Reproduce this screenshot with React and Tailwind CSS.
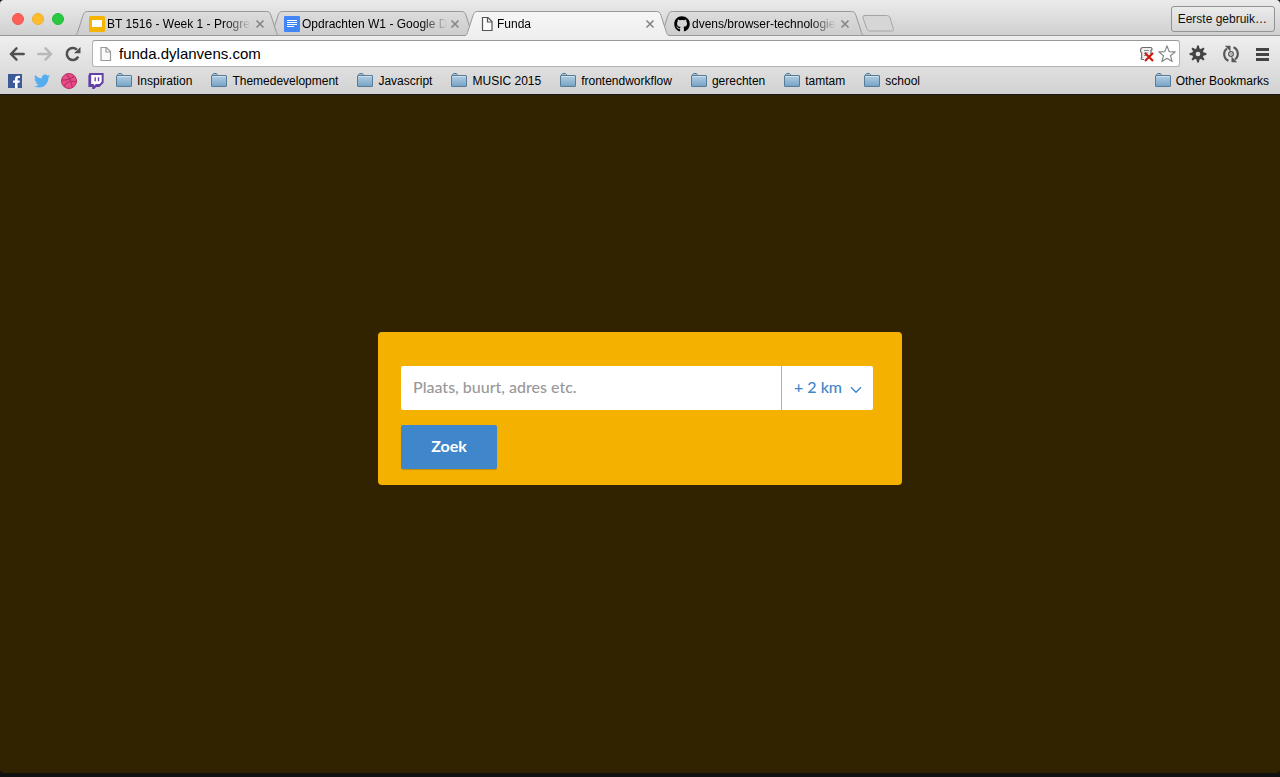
import React from "react";
import { FaTwitter, FaGithub } from "react-icons/fa";

function SlidesIcon() {
  return (
    <svg width="16" height="16" viewBox="0 0 16 16" className="shrink-0">
      <rect width="16" height="16" rx="1.5" fill="#f4b400" />
      <rect x="3" y="4" width="10" height="7" fill="#fff" />
    </svg>
  );
}

function DocsIcon() {
  return (
    <svg width="16" height="16" viewBox="0 0 16 16" className="shrink-0">
      <rect width="16" height="16" rx="1" fill="#4285f4" />
      <path d="M3 4.5h10M3 6.5h10M3 8.5h10M3 10.5h7" stroke="#fff" strokeWidth="1" />
    </svg>
  );
}

function PageIcon({ stroke = "#555", width = 16 }) {
  return (
    <svg width={width} height="16" viewBox="0 0 16 16" className="shrink-0">
      <path d="M3.500 1.500h5.500l4 4v9H3.500z" fill="#fafafa" stroke={stroke} strokeWidth="1.200" />
      <path d="M8.500 1.500v4.500h4.500" fill="none" stroke={stroke} strokeWidth="1.200" />
    </svg>
  );
}

function TabShape({ active }) {
  const curve =
    "M0 24.5C1.500 24.500 2 23 2.500 21.500L8 4.500C9 1.500 10 .5 12.500 .5H191.500C194 .5 195 1.500 196 4.500L201.500 21.500C202 23 202.500 24.500 204 24.500";
  return (
    <svg
      className="absolute inset-0 size-full"
      viewBox="0 0 204 25"
      preserveAspectRatio="none"
      aria-hidden="true"
    >
      <defs>
        <linearGradient id="tabActive" x1="0" y1="0" x2="0" y2="1">
          <stop offset="0" stopColor="#f6f6f6" />
          <stop offset="1" stopColor="#efefef" />
        </linearGradient>
        <linearGradient id="tabIdle" x1="0" y1="0" x2="0" y2="1">
          <stop offset="0" stopColor="#dcdcdc" />
          <stop offset="1" stopColor="#cdcdcd" />
        </linearGradient>
      </defs>
      <path d={active ? curve + "V25H0Z" : curve + "Z"} fill={active ? "url(#tabActive)" : "url(#tabIdle)"} />
      <path d={active ? curve : curve + "Z"} fill="none" stroke="#989898" />
    </svg>
  );
}

function Tab({ icon, title, active, layer }) {
  return (
    <div className={`relative -ml-[9px] flex h-[25px] w-[204px] items-center pl-3.5 ${layer}`}>
      <TabShape active={active} />
      <button
        type="button"
        role="tab"
        aria-selected={!!active}
        className="relative flex w-[162px] items-center gap-0.5 text-left"
      >
        {icon}
        <span className="flex-1 whitespace-nowrap text-xs [mask-image:linear-gradient(to_right,black_82%,transparent)]">
          {title}
        </span>
      </button>
      <button type="button" aria-label={`Close ${title}`} className="relative ml-1">
        <svg width="10" height="10" viewBox="0 0 10 10">
          <path d="M1.500 1.500l7 7M8.500 1.500l-7 7" stroke="#858585" strokeWidth="1.600" />
        </svg>
      </button>
    </div>
  );
}

function Folder() {
  return (
    <svg width="16" height="16" viewBox="0 0 16 16" className="shrink-0">
      <defs>
        <linearGradient id="folderFill" x1="0" y1="0" x2="0" y2="1">
          <stop offset="0" stopColor="#b3cfe3" />
          <stop offset="1" stopColor="#75a2c5" />
        </linearGradient>
      </defs>
      <path d="M1.500 3V1.500L2.500 .5H5.500L6.500 1.500V3" fill="#9fbfd6" stroke="#5a7d97" />
      <rect x=".5" y="2.500" width="15" height="11" rx=".5" fill="url(#folderFill)" stroke="#587c97" />
      <path d="M1.500 3.500h13" stroke="#cbdfed" />
    </svg>
  );
}

function Bookmark({ label }) {
  return (
    <a href="#" className="flex items-center gap-[5px] whitespace-nowrap text-xs">
      <Folder />
      {label}
    </a>
  );
}

function FacebookIcon() {
  return (
    <svg width="16" height="16" viewBox="0 0 16 16">
      <rect x="1" y="1" width="14" height="14" fill="#3c5a9a" />
      <path d="M8 15V9.800H6V7.500H8V6C8 4 9.300 2.800 11.200 2.800H13v2.200H11.800c-.9 0-1.200.4-1.200 1.100v1.400h2.300l-.3 2.300h-2V15z" fill="#fff" />
    </svg>
  );
}

function DribbbleIcon() {
  return (
    <svg width="16" height="16" viewBox="0 0 16 16">
      <circle cx="8" cy="8" r="7.500" fill="#e94c89" stroke="#b92e62" />
      <path
        d="M5.500 1C8.500 4.500 10.500 9 11.200 14.500M.8 7C6 7.200 10.500 6 13.300 2.800M3 13.500C5.500 8.500 10 7.500 15.200 8.800"
        fill="none"
        stroke="#b62f62"
        strokeWidth="1.100"
      />
    </svg>
  );
}

function TwitchIcon() {
  return (
    <svg width="16" height="16" viewBox="0 0 24 24">
      <path d="M4 2h18v12l-4 4h-6l-3 3v-3H4z" fill="#fff" />
      <path
        d="M2.149 0L.537 4.119v16.836h5.731V24h3.224l3.045-3.045h4.657l6.269-6.269V0zM20.500 13.200l-3.300 3.200h-5.300L8.800 19.300v-2.900H4.800V3h15.700z"
        fill="#6441a5"
      />
      <path d="M10.800 6.200v6.300M15.800 6.200v6.300" stroke="#6441a5" strokeWidth="2" />
    </svg>
  );
}

function BackArrow({ color, flip }) {
  return (
    <svg width="16" height="16" viewBox="0 0 16 16" className={flip ? "-scale-x-100" : ""}>
      <path d="M7.500 2.300L2 8l5.500 5.700M2.300 8H14.700" fill="none" stroke={color} strokeWidth="2.400" strokeLinecap="round" />
    </svg>
  );
}

function ReloadIcon() {
  return (
    <svg width="16" height="16" viewBox="0 0 16 16">
      <path d="M13.200 10.600A6 6 0 1 1 11.900 3.600" fill="none" stroke="#505050" strokeWidth="2.500" />
      <path d="M15.500 1v6.300H9z" fill="#505050" />
    </svg>
  );
}

function BlockedIcon() {
  return (
    <svg width="16" height="16" viewBox="0 0 16 16">
      <path
        d="M5 13.500H3.500C2 13.500 1.700 12.300 2.700 11.500V7C1.300 6.500 1.300 5.500 1.500 4 1.800 2.200 2.500 1.500 4 1.500h7.500c2 0 2 2.500.5 3V8"
        fill="#f0f0f0"
        stroke="#6a6a6a"
        strokeWidth="1.200"
      />
      <path d="M5 4.500h5M5 7h4M5 9.500h2" stroke="#8b8b8b" />
      <path d="M6 7l8 8M14 7l-8 8" stroke="#d31108" strokeWidth="2" />
    </svg>
  );
}

function StarIcon() {
  return (
    <svg width="18" height="18" viewBox="0 0 18 18">
      <path
        d="M9 .9l2.200 5.700 6 .3-4.700 3.800 1.600 5.900L9 13.300l-5.100 3.300 1.600-5.900L.8 6.900l6-.3z"
        fill="#fff"
        stroke="#858585"
        strokeWidth="1.200"
        strokeLinejoin="round"
      />
    </svg>
  );
}

const teeth = ["rotate(0 9 9)", "rotate(45 9 9)", "rotate(90 9 9)", "rotate(135 9 9)"];

function GearIcon() {
  return (
    <svg width="18" height="18" viewBox="0 0 18 18">
      <g fill="#444">
        {teeth.map((t) => (
          <path key={t} transform={t} d="M8.100.6h1.800l.8 4v8.800l-.8 4H8.100l-.8-4V4.600z" />
        ))}
        <circle cx="9" cy="9" r="5.800" />
      </g>
      <circle cx="9" cy="9" r="2.300" fill="#e2e2e2" />
    </svg>
  );
}

function SyncIcon() {
  return (
    <svg width="18" height="18" viewBox="0 0 18 18">
      <g fill="none" stroke="#585858" strokeWidth="2.200">
        <path d="M6.500 15.800A7.200 7.200 0 0 1 5 3.500" />
        <path d="M11.500 2.200A7.200 7.200 0 0 1 13 14.500" />
      </g>
      <path d="M2.800.8H8.500V6.500zM15.200 17.200H9.500V11.500z" fill="#585858" />
      <circle cx="9" cy="9" r="2.300" fill="#fff" stroke="#585858" strokeWidth="1.300" />
      <circle cx="9" cy="9" r=".8" fill="#585858" />
    </svg>
  );
}

function MenuIcon() {
  return (
    <svg width="14" height="16" viewBox="0 0 14 16">
      <path d="M1 3.500h13M1 8.500h13M1 13.500h13" stroke="#444" strokeWidth="3" />
    </svg>
  );
}

const folders = [
  "Inspiration",
  "Themedevelopment",
  "Javascript",
  "MUSIC 2015",
  "frontendworkflow",
  "gerechten",
  "tamtam",
  "school",
];

function TabStrip() {
  return (
    <div className="flex h-9 items-end border-b border-[#989898] bg-linear-to-b from-[#ebebeb] to-[#d0d0d0]">
      <div className="flex gap-2 self-center pl-3 pt-0.5">
        <button type="button" aria-label="Close window" className="size-3 rounded-full border border-[#ee5750] bg-[#ff5f57]" />
        <button type="button" aria-label="Minimize window" className="size-3 rounded-full border border-[#eeae26] bg-[#ffbd2e]" />
        <button type="button" aria-label="Zoom window" className="size-3 rounded-full border border-[#25bb38] bg-[#28ca42]" />
      </div>
      <div role="tablist" className="-mb-px ml-5 flex">
        <Tab layer="z-20" icon={<SlidesIcon />} title="BT 1516 - Week 1 - Progre" />
        <Tab layer="z-10" icon={<DocsIcon />} title="Opdrachten W1 - Google D" />
        <Tab layer="z-30" icon={<PageIcon />} title="Funda" active />
        <Tab layer="z-0" icon={<FaGithub size={16} className="shrink-0" />} title="dvens/browser-technologie" />
      </div>
      <button type="button" aria-label="New tab" className="-ml-0.5 mb-[3px]">
        <svg width="32" height="17" viewBox="0 0 32 17">
          <path
            d="M3 .5h21.500c2 0 3 .7 3.700 2.500l3 10.500c.5 1.700 0 2.500-1.500 2.500H8.500c-2 0-3-.7-3.700-2.500L1 3C.5 1.300 1 .5 3 .5z"
            fill="#d6d6d6"
            stroke="#a5a5a5"
          />
        </svg>
      </button>
      <button
        type="button"
        className="mb-[3px] ml-auto mr-[5px] h-[26px] rounded-[3px] border border-[#939393] bg-linear-to-b from-[#ebebeb] to-[#d6d6d6] pb-px pl-1.5 pr-[7px] text-xs text-[#111]"
      >
        Eerste gebruik…
      </button>
    </div>
  );
}

function Toolbar() {
  return (
    <div className="flex items-start pb-px pr-[11px] pt-1">
      <div className="flex h-[27px] items-center gap-3 pl-[9px] pr-[11px]">
        <button type="button" aria-label="Back"><BackArrow color="#505050" /></button>
        <button type="button" aria-label="Forward"><BackArrow color="#b8b8b8" flip /></button>
        <button type="button" aria-label="Reload"><ReloadIcon /></button>
      </div>
      <div className="flex h-[27px] flex-1 items-center rounded-[3px] border border-[#b3b3b3] border-t-[#999] bg-white pl-1 pr-[3px]">
        <PageIcon stroke="#999" width={17} />
        <input
          aria-label="Address"
          defaultValue="funda.dylanvens.com"
          className="ml-[5px] min-w-0 flex-1 bg-transparent text-[15px] leading-5 outline-none"
        />
        <button type="button" aria-label="Blocked content"><BlockedIcon /></button>
        <button type="button" aria-label="Bookmark this page" className="ml-[3px]"><StarIcon /></button>
      </div>
      <div className="ml-[9px] flex h-[27px] items-center gap-[15px]">
        <button type="button" aria-label="Developer settings"><GearIcon /></button>
        <button type="button" aria-label="Sync"><SyncIcon /></button>
        <button type="button" aria-label="Menu"><MenuIcon /></button>
      </div>
    </div>
  );
}

function BookmarksBar() {
  return (
    <nav aria-label="Bookmarks" className="flex h-[26px] items-center pl-[7px] pr-[11px]">
      <div className="mr-3 flex gap-[11px]">
        <a href="#" aria-label="Facebook"><FacebookIcon /></a>
        <a href="#" aria-label="Twitter"><FaTwitter size={16} color="#55acee" /></a>
        <a href="#" aria-label="Dribbble"><DribbbleIcon /></a>
        <a href="#" aria-label="Twitch"><TwitchIcon /></a>
      </div>
      <div className="flex gap-[19px]">
        {folders.map((f) => (
          <Bookmark key={f} label={f} />
        ))}
      </div>
      <div className="ml-auto">
        <Bookmark label="Other Bookmarks" />
      </div>
    </nav>
  );
}

function SearchCard() {
  return (
    <form
      onSubmit={(e) => e.preventDefault()}
      className="w-[524px] max-w-full rounded bg-[#f5b100] pb-4 pl-[23px] pr-[29px] pt-[34px] font-['Lato',sans-serif] text-base"
    >
      <div className="flex h-11 gap-px">
        <input
          aria-label="Locatie"
          placeholder="Plaats, buurt, adres etc."
          className="min-w-0 flex-1 rounded-l-xs bg-white px-3 pb-0.5 font-medium text-[#333] outline-none placeholder:text-[#999]"
        />
        <div className="relative w-[91px]">
          <select
            aria-label="Straal"
            defaultValue="2"
            className="size-full appearance-none rounded-r-xs bg-white pb-0.5 pl-3 font-medium text-[#3f86ca] outline-none"
          >
            <option value="0">+ 0 km</option>
            <option value="1">+ 1 km</option>
            <option value="2">+ 2 km</option>
            <option value="5">+ 5 km</option>
          </select>
          <svg width="12" height="8" viewBox="0 0 12 8" className="pointer-events-none absolute right-[11px] top-5">
            <path d="M1 1.300l5 5 5-5" fill="none" stroke="#3f86ca" strokeWidth="1.400" />
          </svg>
        </div>
      </div>
      <button
        type="submit"
        className="mt-[15px] h-11 w-24 rounded-xs bg-[#3f86ca] pb-0.5 font-bold text-white shadow-[0_1px_1px_rgba(0,0,0,0.2)]"
      >
        Zoek
      </button>
    </form>
  );
}

export default function App() {
  return (
    <div className="flex min-h-screen flex-col bg-[#111] font-['Liberation_Sans',Arial,sans-serif] text-black">
      <header className="overflow-hidden rounded-t border-b border-[#1a1a1a]">
        <TabStrip />
        <div className="bg-linear-to-b from-[#efefef] to-[#d2d2d2]">
          <Toolbar />
          <BookmarksBar />
        </div>
      </header>
      <main className="mb-1 flex flex-1 items-center justify-center rounded-b bg-[#312200] pb-[52px]">
        <SearchCard />
      </main>
    </div>
  );
}
